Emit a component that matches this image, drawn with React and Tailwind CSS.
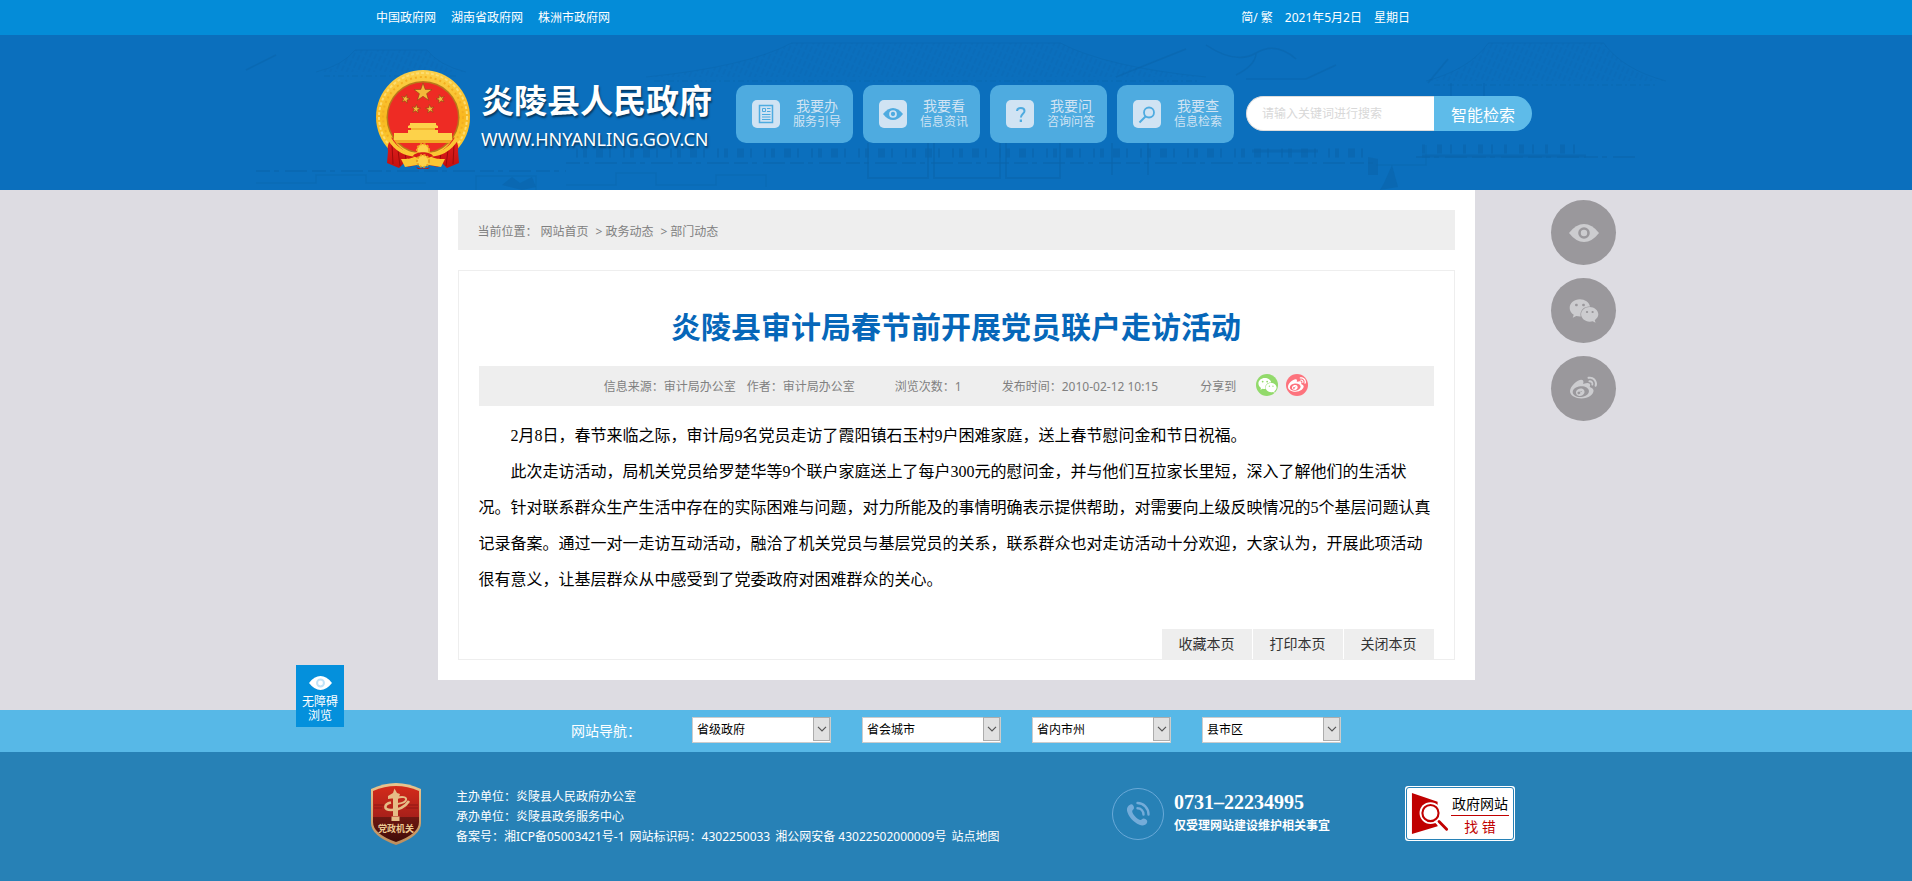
import React from "react";
import { FaWeixin, FaWeibo } from "react-icons/fa";

const SANS = "font-['Noto_Sans','Noto_Sans_CJK_SC',sans-serif]";

function starPoints(cx, cy, r, turn = 0) {
  return Array.from({ length: 10 }, (_, i) => {
    const a = ((-90 + turn + i * 36) * Math.PI) / 180;
    const d = i % 2 ? r * 0.4 : r;
    return `${(cx + d * Math.cos(a)).toFixed(2)},${(cy + d * Math.sin(a)).toFixed(2)}`;
  }).join(" ");
}

function Emblem() {
  return (
    <svg viewBox="0 0 94 99" className="h-[99px] w-[94px] shrink-0" aria-hidden="true">
      <defs>
        <linearGradient id="gold" x1="0" y1="0" x2="0" y2="1">
          <stop offset="0" stopColor="#fbd04a" />
          <stop offset="0.5" stopColor="#f9b81f" />
          <stop offset="1" stopColor="#fcd540" />
        </linearGradient>
        <linearGradient id="drape" x1="0" y1="0" x2="0" y2="1">
          <stop offset="0" stopColor="#e5211f" />
          <stop offset="1" stopColor="#c4100f" />
        </linearGradient>
      </defs>
      <circle cx="47" cy="47" r="47" fill="url(#gold)" />
      <circle cx="47" cy="47" r="44" fill="none" stroke="#fddc70" strokeWidth="2" strokeDasharray="3 2" />
      <circle cx="47" cy="47" r="40" fill="none" stroke="#f3ae20" strokeWidth="2" strokeDasharray="2 3" />
      <circle cx="47" cy="47.5" r="36.5" fill="#b9781a" />
      <circle cx="47" cy="47.5" r="35" fill="#ee2b24" />
      <g fill="#f3b93a" stroke="#8a4a12" strokeWidth="0.6">
        <polygon points={starPoints(47, 22.5, 9.5)} />
        <polygon points={starPoints(29.5, 29, 4.5, 15)} />
        <polygon points={starPoints(64.5, 29, 4.5, -15)} />
        <polygon points={starPoints(40, 39, 4.5, 8)} />
        <polygon points={starPoints(54, 39, 4.5, -8)} />
      </g>
      <g fill="#fdd24a">
        <path d="M34 53h26v2l2 1v2H32v-2l2-1z" />
        <path d="M35 58h24v5H35z" fill="#f2b52f" />
        <path d="M32 60h30v3H32z" />
        <path d="M18 63h58v7H18z" />
        <path d="M15 70h64l-4 3H19z" fill="#f1a925" />
      </g>
      <path d="M16 67c-3 5-5 8-4 14l-1 12 12 5 5-5 4 4 9-2 2-10C32 85 22 78 16 67z" fill="url(#drape)" />
      <path d="M78 67c3 5 5 8 4 14l1 12-12 5-5-5-4 4-9-2-2-10c11 0 21-7 27-18z" fill="url(#drape)" />
      <path d="M16 75l1 19M22 80l2 16M29 84l2 10M78 75l-1 19M72 80l-2 16M65 84l-2 10" stroke="#9c0b0b" strokeWidth="1" fill="none" />
      <path d="M13 68c7 12 18 18 31 16l3-2 3 2c13 2 24-4 31-16" fill="none" stroke="#fbc633" strokeWidth="4" />
      <path d="M25 89c6 0 10 0 15-3h14c5 3 9 3 15 3l-4 8-12-2H41l-12 2z" fill="#fbc633" />
      <circle cx="47" cy="80" r="6" fill="#fdd24a" stroke="#f0a823" strokeWidth="2" strokeDasharray="2 1.5" />
      <path d="M37 86c3-5 17-5 20 0l-5 2-5-3-5 3z" fill="#d81a17" />
      <circle cx="47" cy="91" r="6" fill="#fdd24a" stroke="#e99f1f" strokeWidth="2" strokeDasharray="2 1.5" />
      <path d="M40 97q7 3 14 0l-2 2H42z" fill="#c4100f" />
    </svg>
  );
}

// Faint skyline of roofs and colonnades behind the header
function Skyline() {
  const roof = (x, y, w, h) => (
    <g>
      <path d={`M${x} ${y + h} Q${x + w * 0.18} ${y + h * 0.7} ${x + w * 0.26} ${y} H${x + w * 0.74} Q${x + w * 0.82} ${y + h * 0.7} ${x + w} ${y + h}`} fill="url(#tiles)" stroke="#0a64aa" strokeOpacity="0.4" />
      <path d={`M${x + 8} ${y + h + 4} H${x + w - 8}`} stroke="#0a64aa" strokeOpacity="0.5" strokeDasharray="6 3 2 3" />
    </g>
  );
  return (
    <svg viewBox="0 0 1440 155" preserveAspectRatio="xMidYMid slice" className="pointer-events-none absolute inset-y-0 left-1/2 h-full w-[1440px] -translate-x-1/2" aria-hidden="true">
      <defs>
        <pattern id="tiles" width="5" height="8" patternUnits="userSpaceOnUse" patternTransform="rotate(24)">
          <path d="M1 0v6" stroke="#0a64aa" strokeOpacity="0.5" />
        </pattern>
      </defs>
      <g fill="none">
        {roof(80, 15, 150, 22)}
        {roof(410, 8, 560, 34)}
        {roof(1190, 8, 240, 38)}
        <path d="M10 35L40 20M880 42l70-28M1000 40q20-10 20-22M970 10q30 20 50 8t40 6M1010 44h60l30-14M1215 48v24M1248 48v16M1192 48l20-24" stroke="#0a64aa" strokeOpacity="0.5" strokeWidth="1.5" />
        <path d="M330 128H1140M1180 122H1400M20 136H330" stroke="#0a64aa" strokeOpacity="0.5" strokeWidth="2" strokeDasharray="14 4 5 6 22 5" />
        <path d="M340 118H1130" stroke="#0a64aa" strokeOpacity="0.6" strokeWidth="9" strokeDasharray="2 5 4 9 7 6 2 12" />
        <path d="M1186 114H1350" stroke="#0a64aa" strokeOpacity="0.6" strokeWidth="9" strokeDasharray="3 12 5 8 2 11" />
        <path d="M1186 121H1350M1016 116h66" stroke="#0a64aa" strokeOpacity="0.6" strokeWidth="3" />
        <path d="M632 108v35h60v-35M698 108v35h66v-35M770 108v35h54v-35M876 108v32M912 108v32" stroke="#0a64aa" strokeOpacity="0.5" strokeWidth="2" />
        <path d="M240 155v-14h60v14M330 150h50v-12h40v12h60v-10h50v12M1140 130h50v-20M20 148h60v-8h50v8h60" stroke="#0a64aa" strokeOpacity="0.4" strokeWidth="1.5" />
        <path d="M1132 122v18h10v-16zM1148 148l8-18 6 22-18 3zM266 150l10-8 8 6 12-6 4 10-14 3z" fill="#0a64aa" fillOpacity="0.6" />
      </g>
    </svg>
  );
}

function Eye({ className, ring }) {
  return (
    <svg viewBox="0 0 30 18" className={className} aria-hidden="true">
      <path d="M0 9Q7 0 15 0T30 9Q23 18 15 18T0 9Z" fill="currentColor" />
      <circle cx="15" cy="9" r="4.5" fill="none" stroke={ring} strokeWidth="2.6" />
    </svg>
  );
}

function PhoneGlyph() {
  return (
    <svg viewBox="0 0 26 26" className="size-[26px]" aria-hidden="true">
      <path d="M5.500 3.500C7.500 2.700 9 5 9 7c0 1.600-2 2-1.800 3.600.5 3.200 4.800 7.600 8 8.400 1.600.3 1.800-1.700 3.600-1.500 2.300.2 4.200 2.300 3.200 4.300-1.200 2.500-4.600 3.400-7.600 2C8.500 21.200 3.200 15.400 2 9.800 1.500 7 2.900 4.500 5.500 3.500z" fill="currentColor" />
      <path d="M12.500 2C18.500 2 23.500 7 23.500 13.500M12.500 7.200c3.300 0 6 2.800 6 6.300" fill="none" stroke="currentColor" strokeWidth="2.4" strokeLinecap="round" />
    </svg>
  );
}

const quickLinks = [
  {
    top: "我要办",
    bottom: "服务引导",
    icon: (
      <svg viewBox="0 0 28 28" className="size-7" fill="none" stroke="#4eabe0" aria-hidden="true">
        <path d="M7.500 5.500h13v17h-13z" strokeWidth="1.5" />
        <path d="M10.500 8.500h3v3h-3zM15 8.500h3.500M15 11.500h3.500M10 14.500h8.500M10 17h8.500M10 19.500h8.500" />
      </svg>
    ),
  },
  { top: "我要看", bottom: "信息资讯", icon: <Eye className="h-3 w-5 text-[#4eabe0]" ring="#d0e3f3" /> },
  {
    top: "我要问",
    bottom: "咨询问答",
    icon: (
      <svg viewBox="0 0 28 28" className="size-7" fill="none" stroke="#4eabe0" aria-hidden="true">
        <path d="M11 11c.3-4 7.500-4 7.500 0 0 2.600-3.600 3-3.600 6.500" strokeWidth="2" />
        <path d="M13.700 19.500h2.300V22h-2.300z" fill="#4eabe0" stroke="none" />
      </svg>
    ),
  },
  {
    top: "我要查",
    bottom: "信息检索",
    icon: (
      <svg viewBox="0 0 28 28" className="size-7" fill="none" stroke="#4eabe0" aria-hidden="true">
        <circle cx="16" cy="12.5" r="5" strokeWidth="1.8" />
        <path d="M12.500 16.500l-6 6" strokeWidth="2" />
      </svg>
    ),
  },
];

function Header() {
  return (
    <header className="bg-[#0b6fbd] text-white">
      <div className="bg-[#048cd8]">
        <div className="mx-auto flex h-[35px] w-full max-w-[1160px] items-center text-xs">
          <nav className="flex gap-[15px]">
            <a href="#">中国政府网</a>
            <a href="#">湖南省政府网</a>
            <a href="#">株洲市政府网</a>
          </nav>
          <div className="mr-[126px] ml-auto flex gap-3">
            <span><a href="#">简</a>/ <a href="#">繁</a></span>
            <span>2021年5月2日</span>
            <span>星期日</span>
          </div>
        </div>
      </div>
      <div className="relative">
        <Skyline />
        <div className="relative mx-auto flex w-full max-w-[1160px] items-start pt-[35px] pb-[21px]">
          <a href="#" className="flex w-[360px] shrink-0 gap-[11px]">
            <Emblem />
            <span className="flex flex-col pt-2 [text-shadow:1px_2px_2px_rgba(0,0,0,0.5)]">
              <span className="text-[33px] leading-[46px] font-bold whitespace-nowrap">炎陵县人民政府</span>
              <span className="text-lg leading-[30px]">WWW.HNYANLING.GOV.CN</span>
            </span>
          </a>
          <nav className="mt-[15px] flex gap-[10px]">
            {quickLinks.map((q) => (
              <a key={q.top} href="#" className="flex h-[58px] w-[117px] items-center rounded-[10px] bg-[#4eabe0] pl-4 text-[#d0e3f3]">
                <span className="flex size-7 items-center justify-center rounded-[5px] bg-[#d0e3f3]">{q.icon}</span>
                <span className="ml-[13px] flex flex-col items-center">
                  <span className="text-sm leading-4">{q.top}</span>
                  <span className="text-xs leading-4">{q.bottom}</span>
                </span>
              </a>
            ))}
          </nav>
          <form className="mt-[26px] ml-3 flex h-[35px]" onSubmit={(e) => e.preventDefault()}>
            <input
              type="text"
              aria-label="搜索关键词"
              placeholder="请输入关键词进行搜索"
              className="w-[188px] rounded-l-full border border-r-0 border-[#ddd] bg-white px-[15px] text-xs text-[#333] outline-none placeholder:text-[#d8d8d8]"
            />
            <button type="submit" className="w-[98px] rounded-r-full bg-[#5ebbe9] pt-[2px] text-base">智能检索</button>
          </form>
        </div>
      </div>
    </header>
  );
}

const sideLinks = [
  { label: "无障碍浏览", icon: <Eye className="h-[18px] w-[30px]" ring="#9a989c" /> },
  { label: "微信", icon: <FaWeixin className="size-[30px]" /> },
  { label: "微博", icon: <FaWeibo className="size-[27px]" /> },
];

function Article() {
  return (
    <main className="relative flex-1 bg-[#dddce2] pb-[30px]">
      <div className="mx-auto w-full max-w-[1037px] bg-white p-5">
        <nav className="flex h-10 items-center bg-[#eee] px-5 pt-[3px] text-xs text-[#808080]">
          <span>当前位置：</span>
          <a href="#" className="ml-[3px]">网站首页</a>
          <span className="ml-[7px]">&gt;</span>
          <a href="#" className="ml-[3px]">政务动态</a>
          <span className="ml-[7px]">&gt;</span>
          <a href="#" className="ml-[3px]">部门动态</a>
        </nav>
        <article className="mt-5 border border-[#eee] px-5">
          <h1 className="pt-[33px] pb-[17px] text-center text-3xl leading-[45px] font-bold text-[#0667b9]">炎陵县审计局春节前开展党员联户走访活动</h1>
          <div className="flex h-10 items-center justify-center bg-[#eee] text-xs text-[#808080]">
            <span className="pt-[2px]">信息来源：审计局办公室</span>
            <span className="ml-[11px] pt-[2px]">作者：审计局办公室</span>
            <span className="ml-10 pt-[2px]">浏览次数：1</span>
            <span className="ml-10 pt-[2px]">发布时间：2010-02-12 10:15</span>
            <span className="ml-[42px] pt-[2px]">分享到</span>
            <a href="#" aria-label="微信" className="mb-[2px] ml-5 flex size-[22px] items-center justify-center rounded-full bg-[#92da6b] text-white"><FaWeixin className="size-[19px]" /></a>
            <a href="#" aria-label="微博" className="mb-[2px] ml-2 flex size-[22px] items-center justify-center rounded-full bg-[#fd737d] text-white"><FaWeibo className="size-[18px]" /></a>
          </div>
          <div className="pt-3 indent-8 font-['Liberation_Serif','Noto_Sans_CJK_SC',serif] text-base leading-9 text-black">
            <p>2月8日，春节来临之际，审计局9名党员走访了霞阳镇石玉村9户困难家庭，送上春节慰问金和节日祝福。</p>
            <p>此次走访活动，局机关党员给罗楚华等9个联户家庭送上了每户300元的慰问金，并与他们互拉家长里短，深入了解他们的生活状况。针对联系群众生产生活中存在的实际困难与问题，对力所能及的事情明确表示提供帮助，对需要向上级反映情况的5个基层问题认真记录备案。通过一对一走访互动活动，融洽了机关党员与基层党员的关系，联系群众也对走访活动十分欢迎，大家认为，开展此项活动很有意义，让基层群众从中感受到了党委政府对困难群众的关心。</p>
          </div>
          <div className="mt-[31px] flex justify-end gap-px text-sm text-[#333]">
            {["收藏本页", "打印本页", "关闭本页"].map((t) => (
              <button key={t} type="button" className="h-[30px] w-[90px] bg-[#eee]">{t}</button>
            ))}
          </div>
        </article>
      </div>
      <aside className="absolute top-[10px] left-[calc(50%+595px)] flex flex-col gap-[13px]">
        {sideLinks.map((s) => (
          <a key={s.label} href="#" aria-label={s.label} className="flex size-[65px] items-center justify-center rounded-full bg-[#9a989c] text-[#cccccf]">{s.icon}</a>
        ))}
      </aside>
    </main>
  );
}

function SiteNav() {
  return (
    <div className="bg-[#57b8e7]">
      <div className="mx-auto flex h-[42px] w-full max-w-[770px] items-center">
        <span className="w-[121px] shrink-0 text-sm text-white">网站导航：</span>
        <div className="flex gap-[31px]">
          {["省级政府", "省会城市", "省内市州", "县市区"].map((t) => (
            <div key={t} className="relative mb-1 h-[26px] w-[139px]">
              <select aria-label={t} className="h-full w-full appearance-none border border-[#ccc] bg-white pl-1 text-xs text-black">
                <option>{t}</option>
              </select>
              <span className="pointer-events-none absolute inset-y-px right-px flex w-[17px] items-center justify-center border border-[#adadad] bg-[#e1e1e1]">
                <svg viewBox="0 0 10 6" className="h-[6px] w-[10px]" fill="none" stroke="#555" aria-hidden="true"><path d="M1 .8l4 4 4-4" strokeWidth="1.2" /></svg>
              </span>
            </div>
          ))}
        </div>
      </div>
    </div>
  );
}

function PartyBadge() {
  return (
    <svg viewBox="0 0 52 62" className="h-[62px] w-[52px] shrink-0" role="img" aria-label="党政机关">
      <defs>
        <linearGradient id="shield" x1="0" y1="0" x2="0" y2="1">
          <stop offset="0" stopColor="#d42b1a" />
          <stop offset="0.55" stopColor="#a8201a" />
          <stop offset="0.56" stopColor="#6e1712" />
          <stop offset="1" stopColor="#3f0c08" />
        </linearGradient>
        <linearGradient id="rim" x1="0" y1="0" x2="0" y2="1">
          <stop offset="0" stopColor="#e9c58e" />
          <stop offset="1" stopColor="#bd8d5c" />
        </linearGradient>
      </defs>
      <path d="M1 6Q26-6 51 6V40Q51 53 26 62Q1 53 1 40Z" fill="url(#rim)" />
      <path d="M3 8Q26-2 49 8V39Q49 51 26 59Q3 51 3 39Z" fill="url(#shield)" />
      <path d="M4 22h10M4 25h8M38 22h10M36 25h12" stroke="#8e1914" />
      <g fill="#e6bd86">
        <path d="M23 11h5v22h-5zM21.500 33.500h8V38h-8zM18 13l5-3 1.500-4.500L27 10l3 1-1 3-4 1-7 1z" />
      </g>
      <g fill="none" stroke="#e6bd86">
        <path d="M27 15c5-2 10-1 9 2s-5 3-8 4" strokeWidth="2" />
        <path d="M21 19.500c-7 1.500-8 7.500 0 7.500s14-3 18-9" strokeWidth="2.6" />
      </g>
      <text x="26" y="49" textAnchor="middle" fontSize="9" fontWeight="700" fill="#ecc892">党政机关</text>
    </svg>
  );
}

function Footer() {
  return (
    <footer className="bg-[#2781b6] text-white">
      <div className="mx-auto flex w-full max-w-[1172px] items-start pt-[31px] pr-[27px] pb-9">
        <PartyBadge />
        <div className="mt-1 ml-[34px] text-xs leading-5">
          <p>主办单位：炎陵县人民政府办公室</p>
          <p>承办单位：炎陵县政务服务中心</p>
          <p className="flex gap-[5px]">
            <span>备案号：<a href="#">湘ICP备05003421号-1</a></span>
            <span>网站标识码：4302250033</span>
            <a href="#">湘公网安备 43022502000009号</a>
            <a href="#">站点地图</a>
          </p>
        </div>
        <div className="mt-[5px] ml-auto flex items-center gap-[10px]">
          <span className="flex size-[52px] items-center justify-center rounded-full border border-[#69a9d8] text-[#74acd9]"><PhoneGlyph /></span>
          <div className="font-bold">
            <p className="font-['Liberation_Serif',serif] text-xl leading-[22px]">0731–22234995</p>
            <p className="pt-[2px] text-xs leading-[22px]">仅受理网站建设维护相关事宜</p>
          </div>
        </div>
        <a href="#" className="mt-[3px] ml-[75px] block rounded-[3px] bg-white p-px">
          <span className="flex h-[53px] w-[108px] items-center gap-[2px] rounded-[3px] border border-[#2781b6] pl-1">
            <svg viewBox="0 0 40 46" className="h-[46px] w-[38px] shrink-0" aria-hidden="true">
              <path d="M1 1l27 9v26L1 44z" fill="#c00000" />
              <circle cx="20.5" cy="22" r="11.500" fill="#fff" />
              <path d="M25 28l13 12" stroke="#fff" strokeWidth="6" />
              <circle cx="20.500" cy="22" r="8.500" fill="#fff" stroke="#c00000" strokeWidth="2.2" />
              <path d="M29.500 31l8 8" stroke="#c00000" strokeWidth="3" strokeLinecap="round" />
            </svg>
            <span className="flex flex-col items-center pt-1 text-sm">
              <span className="border-b border-[#c00000] px-px leading-[22px] text-black">政府网站</span>
              <span className="leading-[22px] text-[#c00000]">找 错</span>
            </span>
          </span>
        </a>
      </div>
    </footer>
  );
}

export default function App() {
  return (
    <div className={`flex min-h-screen flex-col ${SANS}`}>
      <Header />
      <Article />
      <SiteNav />
      <Footer />
      <a href="#" className="fixed bottom-[154px] left-[calc(50%-660px)] flex h-[62px] w-12 flex-col items-center bg-[#0490dc] pt-[11px] text-center text-xs leading-[14px] text-white">
        <Eye className="mb-[5px] h-[14px] w-[23px]" ring="#bfe2f7" />
        <span>无障碍<br />浏览</span>
      </a>
    </div>
  );
}
